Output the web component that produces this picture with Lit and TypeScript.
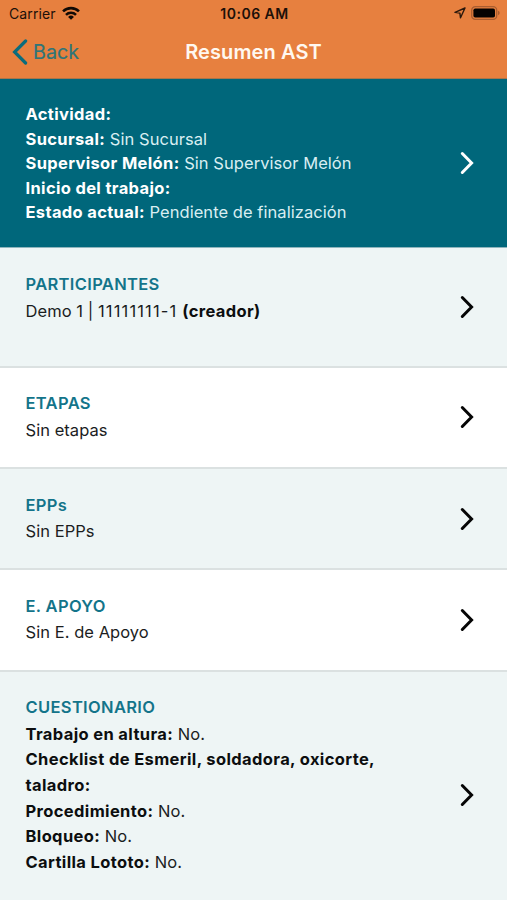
import { LitElement, html, css, svg } from "lit";
import { customElement, property } from "lit/decorators.js";
import { classMap } from "lit/directives/class-map.js";

type Part = { text: string; kind: "bold" | "regular" | "digits" };
type Section = {
  title?: string;
  lines: Part[][];
  tone: "teal" | "tint" | "plain";
  size?: "tall" | "last";
};

const b = (text: string): Part => ({ text, kind: "bold" });
const r = (text: string): Part => ({ text, kind: "regular" });
const d = (text: string): Part => ({ text, kind: "digits" });

const SECTIONS: Section[] = [
  {
    tone: "teal",
    lines: [
      [b("Actividad:")],
      [b("Sucursal:"), r(" Sin Sucursal")],
      [b("Supervisor Melón:"), r(" Sin Supervisor Melón")],
      [b("Inicio del trabajo:")],
      [b("Estado actual:"), r(" Pendiente de finalización")],
    ],
  },
  {
    title: "PARTICIPANTES",
    tone: "tint",
    size: "tall",
    lines: [[r("Demo 1 | "), d("11111111-1"), r(" "), b("(creador)")]],
  },
  { title: "ETAPAS", tone: "plain", lines: [[r("Sin etapas")]] },
  { title: "EPPs", tone: "tint", lines: [[r("Sin EPPs")]] },
  { title: "E. APOYO", tone: "plain", lines: [[r("Sin E. de Apoyo")]] },
  {
    title: "CUESTIONARIO",
    tone: "tint",
    size: "last",
    lines: [
      [b("Trabajo en altura:"), r(" No.")],
      [b("Checklist de Esmeril, soldadora, oxicorte, taladro:")],
      [b("Procedimiento:"), r(" No.")],
      [b("Bloqueo:"), r(" No.")],
      [b("Cartilla Lototo:"), r(" No.")],
    ],
  },
];

@customElement("status-bar")
export class StatusBar extends LitElement {
  static styles = css`
    :host {
      display: grid;
      grid-template-columns: 1fr auto 1fr;
      align-items: center;
      height: 27px;
      padding: 0 7px 0 9px;
      color: #1c1009;
      font-size: 14px;
      line-height: 27px;
    }
    .left { display: flex; align-items: center; gap: 6px; }
    .carrier { letter-spacing: 0.1px; }
    .time { font-weight: 600; letter-spacing: 0.5px; }
    .right { display: flex; align-items: center; justify-content: flex-end; gap: 5px; }
    svg { display: block; }
    .wifi { margin-top: -2px; }
    .status { margin-top: -1px; }
  `;
  render() {
    return html`
      <div class="left">
        <span class="carrier">Carrier</span>
        <svg class="wifi" width="18" height="14" viewBox="0 0 19 14" fill="none" stroke="#120a05" stroke-width="2.7">
          <path d="M1.1 5.3a12 12 0 0 1 16.8 0" />
          <path d="M4.2 8.9a7.6 7.6 0 0 1 10.6 0" />
          <path d="M9.5 14 6.4 11.1a4.4 4.4 0 0 1 6.2 0z" fill="#120a05" stroke="none" />
        </svg>
      </div>
      <div class="time">10:06 AM</div>
      <div class="right">
        <svg class="status" width="12" height="12" viewBox="0 0 12 12" fill="none" stroke="#2b180c" stroke-width="1.4" stroke-linejoin="round">
          <path d="M11 1 1 5.4l4.9.7.6 4.7z" />
        </svg>
        <svg class="status" width="29" height="14" viewBox="0 0 29 14">
          <rect x=".7" y=".7" width="25" height="12.6" rx="3.6" fill="none" stroke="#a95d30" stroke-width="1.3" />
          <rect x="2.4" y="2.4" width="21.6" height="9.2" rx="1.8" fill="#050302" />
          <path d="M27 4.8q1.7.6 1.7 2.2T27 9.2z" fill="#a95d30" />
        </svg>
      </div>
    `;
  }
}

@customElement("nav-bar")
export class NavBar extends LitElement {
  static styles = css`
    :host {
      display: grid;
      grid-template-columns: 1fr auto 1fr;
      align-items: center;
      box-sizing: border-box;
      height: 52px;
      padding: 0 12px 2px;
      border-bottom: 1px solid #a9754a;
    }
    .back { display: flex; align-items: center; gap: 5px; color: #2e7579; font-size: 19.7px; }
    .label { -webkit-text-stroke: 0.2px #2e7579; }
    .title { color: #fff8f0; font-size: 20px; font-weight: 600; letter-spacing: 0.1px; }
    svg { display: block; }
  `;
  render() {
    return html`
      <div class="back">
        <svg width="16" height="26" viewBox="0 0 16 26" fill="none" stroke="#0b6c7c" stroke-width="3.2" stroke-linecap="round">
          <path d="M13.6 2 2.6 13l11 11" />
        </svg>
        <span class="label">Back</span>
      </div>
      <div class="title">Resumen AST</div>
    `;
  }
}

@customElement("summary-row")
export class SummaryRow extends LitElement {
  static styles = css`
    :host { display: block; }
    .row {
      box-sizing: border-box;
      display: flex;
      align-items: center;
      justify-content: space-between;
      height: 101.3px;
      padding: 0 32.5px 0 25.5px;
      border-bottom: 2px solid #dbe1e1;
      color: #1b1d1e;
      line-height: 25.7px;
      font-size: 16.5px;
    }
    .body { width: 373px; align-self: flex-start; padding-top: 22.6px; }
    .teal {
      height: 169px;
      background: #00677b;
      color: #d9eef2;
      border-bottom: 1px solid #8fb5bd;
      line-height: 24.5px;
    }
    .teal .body, .tall .body { padding-top: 23px; }
    .tint { background: #eef5f5; }
    .plain { background: #fff; }
    .tall { height: 119.7px; }
    .last { height: 246px; border-bottom: 0; }
    .title { color: #13748a; font-weight: 600; line-height: 27.5px; letter-spacing: 0.34px; }
    .regular { letter-spacing: 0.05px; }
    .digits { letter-spacing: 1.15px; }
    .bold { font-weight: 700; color: #0c0e0f; letter-spacing: 0.37px; }
    .teal .bold { color: #fff; letter-spacing: 0.34px; }
    svg { display: block; }
  `;
  @property({ attribute: false }) section!: Section;
  render() {
    const s = this.section;
    return html`
      <div class=${classMap({ row: true, [s.tone]: true, [s.size ?? "normal"]: true })}>
        <div class="body">
          ${s.title ? html`<div class="title">${s.title}</div>` : ""}
          ${s.lines.map(
            (line) => html`<div class="line">${line.map((p) => html`<span class=${p.kind}>${p.text}</span>`)}</div>`
          )}
        </div>
        <svg width="16" height="24" viewBox="0 0 16 24" fill="none" stroke-width="3" stroke-linecap="round"
          stroke=${s.tone === "teal" ? "#fff" : "#050505"}>
          ${svg`<path d="M3.3 2.5 12.6 12l-9.3 9.5" />`}
        </svg>
      </div>
    `;
  }
}

@customElement("app-root")
export class AppRoot extends LitElement {
  static styles = css`
    :host {
      display: block;
      height: 900px;
      overflow: hidden;
      background: #eef5f5;
      font-family: Inter, "Liberation Sans", sans-serif;
    }
    .header { background: #e7803f; }
  `;
  render() {
    return html`
      <div class="header">
        <status-bar></status-bar>
        <nav-bar></nav-bar>
      </div>
      ${SECTIONS.map((s) => html`<summary-row .section=${s}></summary-row>`)}
    `;
  }
}
